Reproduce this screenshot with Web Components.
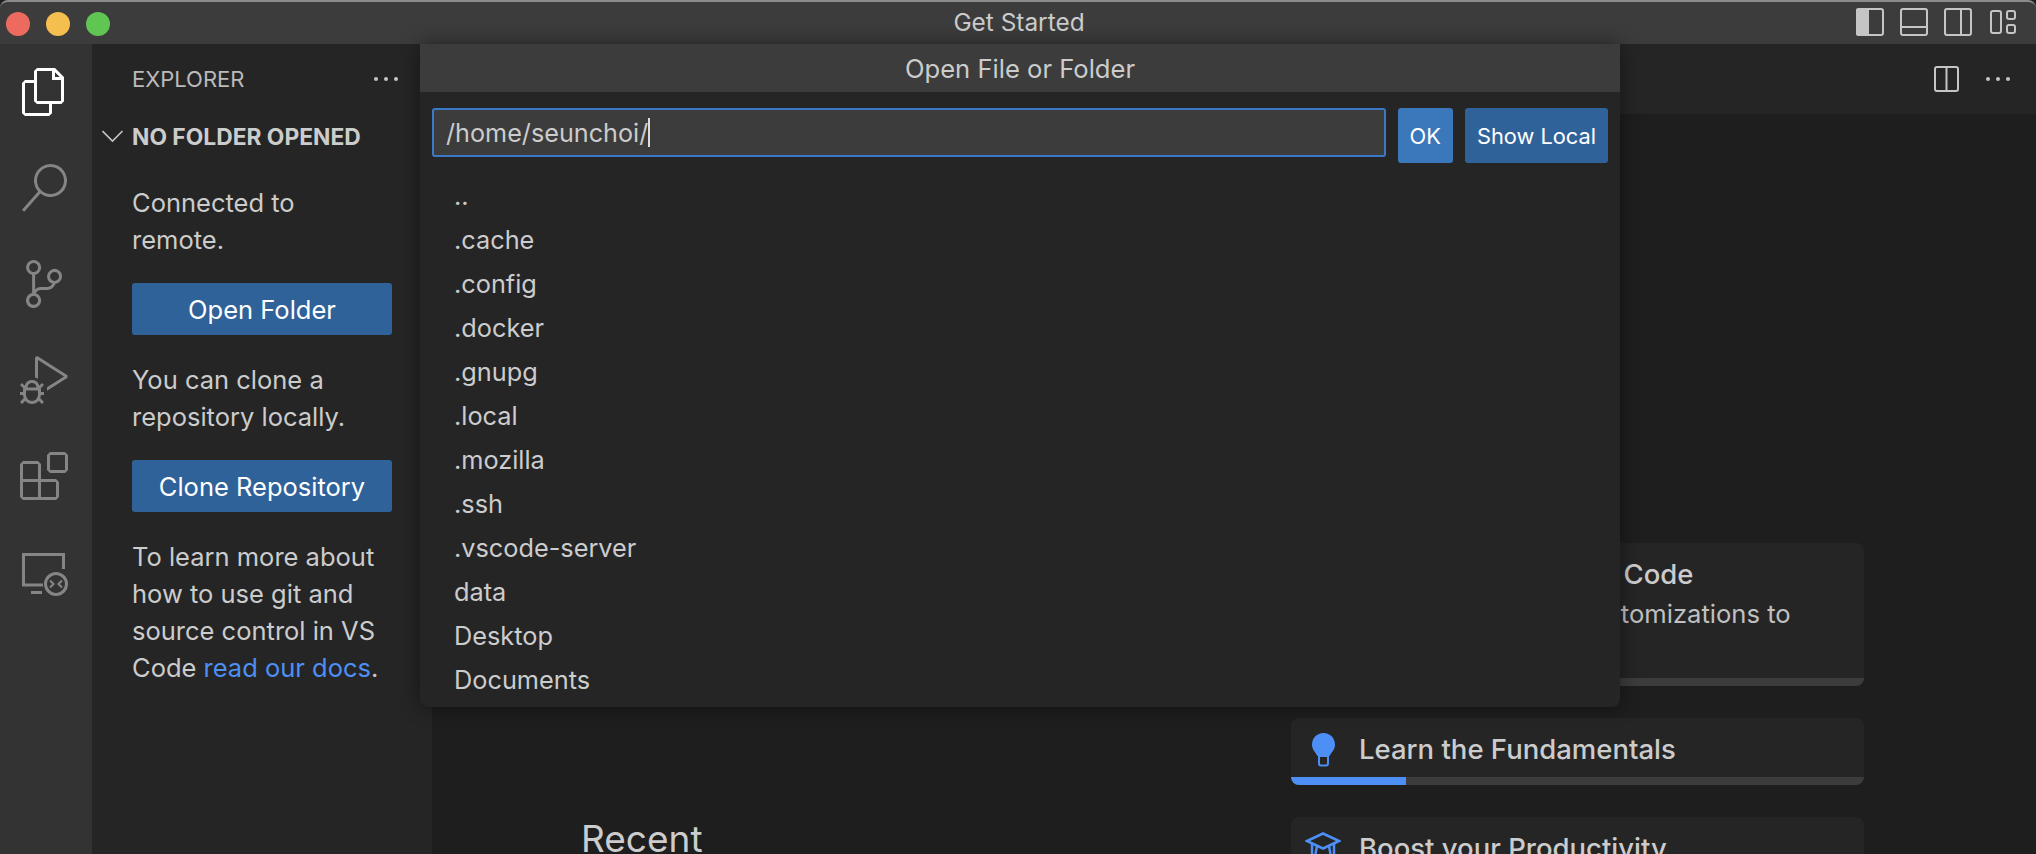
<!DOCTYPE html>
<html lang="en">
<head>
<meta charset="utf-8">
<title>Get Started</title>
<style>
    html, body { margin: 0; height: 100%; overflow: hidden; background: #1e1e1e; }
    body { font-family: Inter, "Noto Sans", sans-serif; color: #cccccc; }
    vs-window { height: 854px; }
</style>
</head>
<body>
<vs-window>
    <vs-titlebar slot="top">Get Started</vs-titlebar>
    <vs-activitybar slot="left"></vs-activitybar>
    <vs-sidebar slot="side"></vs-sidebar>
    <vs-editor slot="main">
        <vs-card slot="cards" progress="0" title="Get Started with VS Code" text="Discover the best customizations to make VS Code yours."></vs-card>
        <vs-card slot="cards" progress="20" icon="bulb" title="Learn the Fundamentals"></vs-card>
        <vs-card slot="cards" progress="0" icon="cap" title="Boost your Productivity"></vs-card>
    </vs-editor>
    <vs-quickinput slot="overlay">
        <vs-pick>..</vs-pick>
        <vs-pick>.cache</vs-pick>
        <vs-pick>.config</vs-pick>
        <vs-pick>.docker</vs-pick>
        <vs-pick>.gnupg</vs-pick>
        <vs-pick>.local</vs-pick>
        <vs-pick>.mozilla</vs-pick>
        <vs-pick>.ssh</vs-pick>
        <vs-pick>.vscode-server</vs-pick>
        <vs-pick>data</vs-pick>
        <vs-pick>Desktop</vs-pick>
        <vs-pick>Documents</vs-pick>
    </vs-quickinput>
</vs-window>

<script>
class VsWindow extends HTMLElement {
    connectedCallback() {
        this.attachShadow({ mode: 'open' });
        this.shadowRoot.innerHTML = `
            <style>
                :host { display: grid; position: relative; overflow: hidden; grid-template-columns: 92px 340px 1fr; grid-template-rows: 44px 810px; }
                .top { grid-column: 1 / 4; display: grid; }
                .col { display: grid; min-width: 0; overflow: hidden; }
            </style>
            <div class="top"><slot name="top"></slot></div>
            <div class="col"><slot name="left"></slot></div>
            <div class="col"><slot name="side"></slot></div>
            <div class="col"><slot name="main"></slot></div>
            <slot name="overlay"></slot>
        `;
    }
}

class VsTitlebar extends HTMLElement {
    connectedCallback() {
        this.attachShadow({ mode: 'open' });
        this.shadowRoot.innerHTML = `
            <style>
                :host { display: flex; align-items: center; justify-content: center; position: relative; height: 44px; box-sizing: border-box; background: #3c3c3c; border-top: 2px solid #8c8c8c; border-radius: 8px 8px 0 0; font-size: 24.4px; color: #cccccc; padding: 0 0 2px 2px; }
                .lights { position: absolute; left: 6px; top: 10px; display: flex; gap: 16px; }
                .lights i { display: block; width: 24px; height: 24px; border-radius: 50%; }
                .layout { position: absolute; right: 20px; top: 6px; display: flex; gap: 16px; }
                svg { display: block; fill: none; stroke: #c5c5c5; stroke-width: 2; }
            </style>
            <div class="lights">
                <i style="background:#ed6a5e"></i><i style="background:#f4bf4f"></i><i style="background:#61c554"></i>
            </div>
            <slot></slot>
            <div class="layout">
                <svg width="28" height="28" viewBox="0 0 28 28"><rect x="1" y="1" width="26" height="26" rx="2"/><path d="M1 3a2 2 0 0 1 2-2h9v26H3a2 2 0 0 1-2-2z" fill="#c5c5c5"/></svg>
                <svg width="28" height="28" viewBox="0 0 28 28"><rect x="1" y="1" width="26" height="26" rx="2"/><path d="M1 19h26"/></svg>
                <svg width="28" height="28" viewBox="0 0 28 28"><rect x="1" y="1" width="26" height="26" rx="2"/><path d="M17 1v26"/></svg>
                <svg width="28" height="28" viewBox="0 0 28 28"><rect x="3" y="3" width="10" height="22" rx="2"/><rect x="19" y="3" width="8" height="8" rx="2"/><rect x="19" y="17" width="8" height="8" rx="2"/></svg>
            </div>
        `;
    }
}

class VsActivitybar extends HTMLElement {
    connectedCallback() {
        this.attachShadow({ mode: 'open' });
        this.shadowRoot.innerHTML = `
            <style>
                :host { display: flex; flex-direction: column; gap: 48px; background: #333333; padding: 24px 24px 0 20px; box-sizing: border-box; }
                svg { display: block; width: 48px; height: 48px; fill: #858585; flex: none; }
                .active { fill: #ffffff; }
                .remote { fill: none; stroke: #858585; stroke-width: 3; }
            </style>
            <svg class="active" viewBox="0 0 24 24"><path d="M17.5 0h-9L7 1.5V6H2.5L1 7.5v15.07L2.5 24h12.07L16 22.57V18h4.7l1.3-1.43V4.5L17.5 0zm0 2.12l2.38 2.38H17.5V2.12zm-3 20.38h-12v-15H7v9.07L8.5 18h6v4.5zm6-6h-12v-15H16V6h4.5v10.5z"/></svg>
            <svg viewBox="0 0 24 24"><path d="M15.25 0a8.25 8.25 0 0 0-6.18 13.72L1 22.88l1.12 1 8.05-9.12A8.251 8.251 0 1 0 15.25.01V0zm0 15a6.75 6.75 0 1 1 0-13.5 6.75 6.75 0 0 1 0 13.5z"/></svg>
            <svg viewBox="0 0 24 24"><path d="M21.007 8.222A3.738 3.738 0 0 0 15.045 5.2a3.737 3.737 0 0 0 1.156 6.583 2.988 2.988 0 0 1-2.668 1.67h-2.99a4.456 4.456 0 0 0-2.989 1.165V7.4a3.737 3.737 0 1 0-1.494 0v9.117a3.776 3.776 0 1 0 1.816.099 2.99 2.99 0 0 1 2.668-1.667h2.99a4.484 4.484 0 0 0 4.223-3.039 3.736 3.736 0 0 0 3.25-3.687zM4.565 3.738a2.242 2.242 0 1 1 4.484 0 2.242 2.242 0 0 1-4.484 0zm4.484 16.441a2.242 2.242 0 1 1-4.484 0 2.242 2.242 0 0 1 4.484 0zm8.221-9.715a2.242 2.242 0 1 1 0-4.485 2.242 2.242 0 0 1 0 4.485z"/></svg>
            <svg viewBox="0 0 24 24"><path d="M10.94 13.5l-1.32 1.32a3.73 3.73 0 0 0-7.24 0L1.06 13.5 0 14.56l1.72 1.72-.22.22V18H0v1.5h1.5v.08c.077.489.214.966.41 1.42L0 22.94 1.06 24l1.65-1.65A4.308 4.308 0 0 0 6 24a4.31 4.31 0 0 0 3.29-1.65L10.94 24 12 22.94 10.09 21c.198-.464.336-.951.41-1.45v-.1H12V18h-1.5v-1.5l-.22-.22L12 14.56l-1.06-1.06zM6 13.5a2.25 2.25 0 0 1 2.25 2.25h-4.5A2.25 2.25 0 0 1 6 13.5zm3 6a3.33 3.33 0 0 1-3 3 3.33 3.33 0 0 1-3-3v-2.25h6v2.25zm14.76-9.9v1.26L13.5 17.37v-1.77l8.5-5.37L9 2v9.46a5.07 5.07 0 0 0-1.5-.72V.63L8.64 0l15.12 9.6z"/></svg>
            <svg viewBox="0 0 24 24"><path d="M13.5 1.5L15 0h7.5L24 1.5V9l-1.5 1.5H15L13.5 9V1.5zm1.5 0V9h7.5V1.5H15zM0 15V6l1.5-1.5H9L10.5 6v7.5H18l1.5 1.5v7.5L18 24H1.5L0 22.5V15zm9-1.5V6H1.5v7.5H9zM9 15H1.5v7.5H9V15zm1.5 7.5H18V15h-7.5v7.5z"/></svg>
            <svg class="remote" viewBox="0 0 48 48"><path d="M23 37H3.5V6.500h40V21"/><path d="M11 44.500h11"/><circle cx="36" cy="36" r="10.500"/><path d="M30 32.500l3.500 3.500-3.500 3.500M42 32.500L38.500 36l3.500 3.500" stroke-width="2"/></svg>
        `;
    }
}

class VsSidebar extends HTMLElement {
    connectedCallback() {
        this.attachShadow({ mode: 'open' });
        this.shadowRoot.innerHTML = `
            <style>
                :host { display: block; background: #252526; font-size: 25.5px; line-height: 37px; color: #cccccc; }
                .head { display: flex; align-items: center; justify-content: space-between; height: 70px; padding: 0 34px 0 40px; font-size: 22px; color: #bbbbbb; }
                .dots { display: flex; gap: 6px; }
                .dots i { width: 4px; height: 4px; border-radius: 50%; background: #c5c5c5; }
                .section { display: flex; align-items: center; height: 44px; font-size: 22.8px; font-weight: 700; color: #cccccc; }
                .section svg { width: 22px; height: 22px; margin: 0 8px 0 10px; fill: none; stroke: #c5c5c5; stroke-width: 1.6; }
                .body { padding: 0 40px; width: 260px; }
                p { margin: 0; }
                .b1 { margin-top: 26px; }
                .btn { display: flex; align-items: center; justify-content: center; height: 52px; background: #30629a; color: #ffffff; border-radius: 3px; margin: 25px 0 26px; }
                a { color: #4d8ff5; text-decoration: none; }
            </style>
            <div class="head"><span>EXPLORER</span><span class="dots"><i></i><i></i><i></i></span></div>
            <div class="section"><svg viewBox="0 0 22 22"><path d="M.5 6l10 10 10-10"/></svg>NO FOLDER OPENED</div>
            <div class="body">
                <p class="b1">Connected to remote.</p>
                <div class="btn">Open Folder</div>
                <p>You can clone a repository locally.</p>
                <div class="btn">Clone Repository</div>
                <p>To learn more about how to use git and source control in VS Code <a>read our docs</a>.</p>
            </div>
        `;
    }
}

class VsEditor extends HTMLElement {
    connectedCallback() {
        this.attachShadow({ mode: 'open' });
        this.shadowRoot.innerHTML = `
            <style>
                :host { display: flex; flex-direction: column; background: #1e1e1e; overflow: hidden; }
                .tabs { flex: none; display: flex; align-items: center; justify-content: flex-end; gap: 27px; height: 70px; padding-right: 26px; background: #252526; }
                .tabs svg { fill: none; stroke: #c5c5c5; stroke-width: 2; }
                .dots { display: flex; gap: 6px; }
                .dots i { width: 4px; height: 4px; border-radius: 50%; background: #c5c5c5; }
                .page { display: flex; padding-left: 149px; }
                .left { width: 710px; flex: none; padding-top: 703px; }
                h2 { margin: 0; font-size: 37px; line-height: 44px; font-weight: 400; color: #cccccc; }
                .right { width: 573px; flex: none; padding-top: 429px; display: flex; flex-direction: column; gap: 32px; }
            </style>
            <div class="tabs">
                <svg width="25" height="26" viewBox="0 0 25 26"><rect x="1" y="1" width="23" height="24" rx="2"/><path d="M12.500 1v24"/></svg>
                <span class="dots"><i></i><i></i><i></i></span>
            </div>
            <div class="page">
                <div class="left"><h2>Recent</h2></div>
                <div class="right"><slot name="cards"></slot></div>
            </div>
        `;
    }
}

class VsCard extends HTMLElement {
    connectedCallback() {
        const icons = {
            bulb: `<svg style="margin-left:7px" width="23" height="34" viewBox="0 0 23 34"><path d="M11.500 0C5 0 0 5 0 11.500c0 5 3 7 5.500 11.500h12c2.500-4.500 5.500-6.500 5.500-11.500C23 5 18 0 11.500 0z" fill="#4d8ff5"/><path d="M7 23h9v7.500a2 2 0 0 1-2 2H9a2 2 0 0 1-2-2z" fill="none" stroke="#4d8ff5" stroke-width="2"/></svg>`,
            cap: `<svg width="36" height="30" viewBox="0 0 36 30" fill="none" stroke="#4d8ff5" stroke-width="2.500"><path d="M18 1.500L2 9l16 7.500L34 9z"/><path d="M7 12v13M29 12v13M12 14l-2 11M24 14l2 11"/></svg>`
        };
        const icon = icons[this.getAttribute('icon')] || '';
        const text = this.getAttribute('text');
        const progress = this.getAttribute('progress');
        this.attachShadow({ mode: 'open' });
        this.shadowRoot.innerHTML = `
            <style>
                :host { display: block; background: #252526; border-radius: 8px; overflow: hidden; }
                .row { display: flex; padding: 13px 18px 10px 14px; min-height: 36px; }
                .ic { width: 54px; height: 36px; flex: none; padding-top: 2px; box-sizing: border-box; }
                .ic svg { display: block; }
                h3 { margin: 0; font-size: 27.5px; line-height: 36px; font-weight: 500; color: #cccccc; }
                p { margin: 4px 0 0; font-size: 25.6px; line-height: 36px; color: #c0c0c0; }
                .bar { height: 8px; background: #3c3c3c; }
                .bar i { display: block; height: 100%; background: #4d8ff5; }
            </style>
            <div class="row">
                <div class="ic">${icon}</div>
                <div>
                    <h3>${this.getAttribute('title')}</h3>
                    ${text ? `<p>${text}</p>` : ''}
                </div>
            </div>
            <div class="bar"><i style="width:${progress}%"></i></div>
        `;
    }
}

class VsQuickinput extends HTMLElement {
    connectedCallback() {
        this.attachShadow({ mode: 'open' });
        this.shadowRoot.innerHTML = `
            <style>
                :host { display: block; position: absolute; left: 420px; top: 44px; width: 1200px; height: 663px; background: #252526; border-radius: 0 0 8px 8px; box-shadow: 0 0 20px rgba(0,0,0,.45); overflow: hidden; color: #cccccc; }
                .title { display: flex; align-items: center; justify-content: center; height: 48px; background: #3c3c3c; font-size: 25.6px; }
                .bar { display: flex; align-items: flex-start; gap: 12px; padding: 16px 12px 0; }
                .field { flex: 1; display: flex; align-items: center; height: 49px; box-sizing: border-box; padding: 0 12px; background: #3c3c3c; border: 2px solid #3a79c6; border-radius: 3px; font-size: 25.2px; }
                .caret { width: 1.500px; height: 29px; background: #dddddd; }
                .btn { display: flex; align-items: center; justify-content: center; height: 55px; padding: 0 12px; border-radius: 3px; color: #ffffff; font-size: 21.8px; background: #30629a; }
                .ok { background: #3b77bb; }
                .list { padding-top: 10px; }
            </style>
            <div class="title">Open File or Folder</div>
            <div class="bar">
                <div class="field">/home/seunchoi/<span class="caret"></span></div>
                <div class="btn ok">OK</div>
                <div class="btn">Show Local</div>
            </div>
            <div class="list"><slot></slot></div>
        `;
    }
}

class VsPick extends HTMLElement {
    connectedCallback() {
        this.attachShadow({ mode: 'open' });
        this.shadowRoot.innerHTML = `
            <style>
                :host { display: flex; align-items: center; height: 44px; padding-left: 34px; font-size: 25.3px; color: #cccccc; }
            </style>
            <slot></slot>
        `;
    }
}

customElements.define('vs-window', VsWindow);
customElements.define('vs-titlebar', VsTitlebar);
customElements.define('vs-activitybar', VsActivitybar);
customElements.define('vs-sidebar', VsSidebar);
customElements.define('vs-editor', VsEditor);
customElements.define('vs-card', VsCard);
customElements.define('vs-quickinput', VsQuickinput);
customElements.define('vs-pick', VsPick);
</script>
</body>
</html>
